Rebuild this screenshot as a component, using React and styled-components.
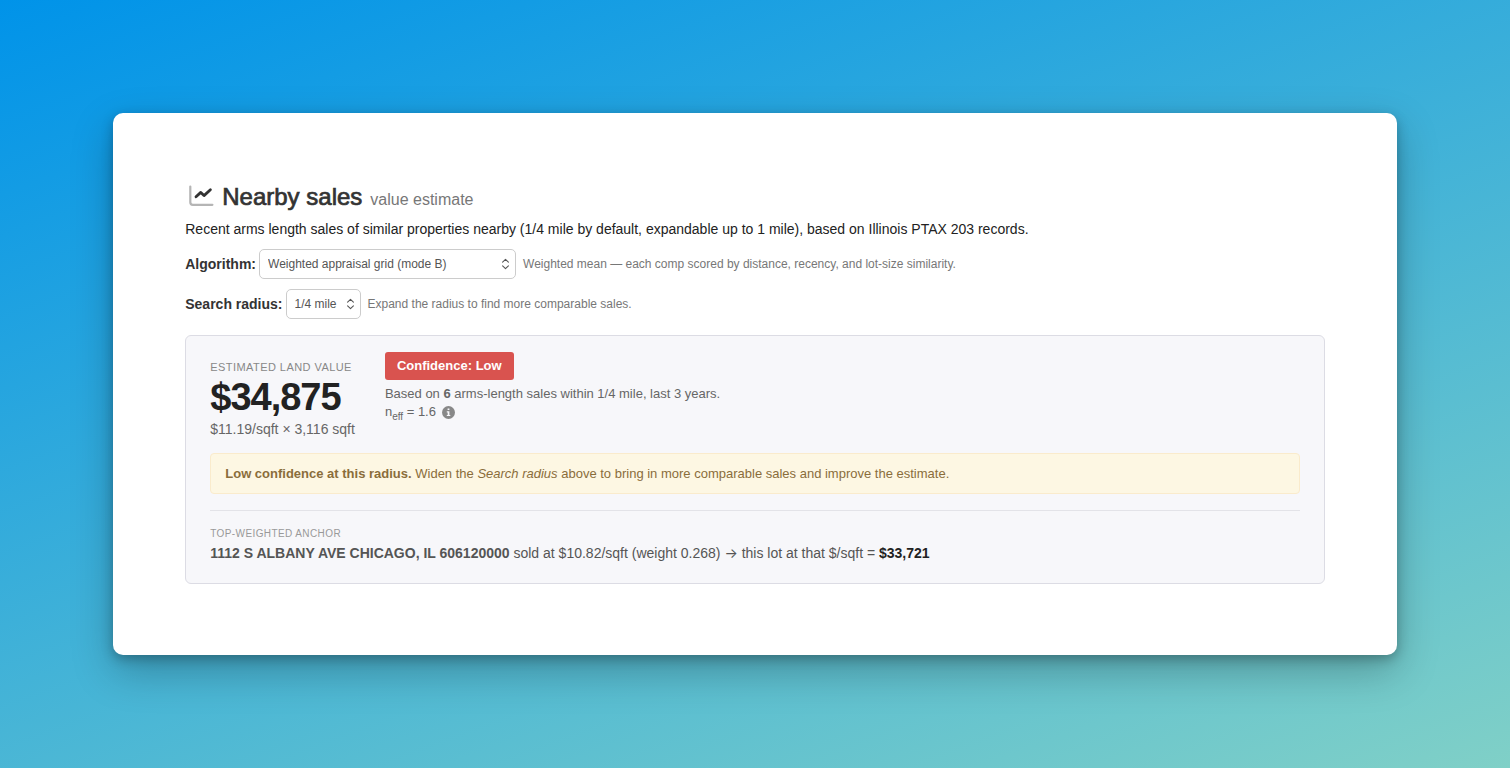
import React from 'react';
import styled, { createGlobalStyle } from 'styled-components';

const GlobalStyle = createGlobalStyle`
  *, *::before, *::after { box-sizing: border-box; }
  body {
    margin: 0;
    background: #46b2d6;
    color: #333;
    font-family: "Helvetica Neue", "Liberation Sans", Arial, sans-serif;
    font-size: 14px;
    line-height: 20px;
    -webkit-font-smoothing: antialiased;
  }
`;

const Page = styled.div`
  min-height: 100vh;
  display: flex;
  align-items: center;
  justify-content: center;
  padding: 32px 0;
  background: linear-gradient(160deg, #0093e9 0%, #80d0c7 100%);
`;

const Card = styled.main`
  width: 85%;
  padding: 71px 72px;
  border-radius: 10px;
  background: #fff;
  box-shadow: 0 16px 40px rgba(0, 0, 0, 0.25), 0 4px 12px rgba(0, 0, 0, 0.25);
`;

const Heading = styled.h1`
  display: flex;
  align-items: baseline;
  gap: 8px;
  margin: 0 0 7px;
  color: #333;
  font-size: 24px;
  font-weight: 400;
  line-height: 25px;
`;

const Title = styled.span`
  -webkit-text-stroke: 0.03em currentColor;
`;

const Subtitle = styled.small`
  color: #777;
  font-size: 16px;
`;

const ChartIcon = styled.svg`
  flex: none;
  width: 26px;
  height: 23px;
  margin-left: 3px;
  align-self: flex-start;
`;

const Intro = styled.p`
  margin: 0 0 10px;
  color: #222;
`;

const Field = styled.div`
  display: flex;
  align-items: center;
  min-height: 30px;
  margin-bottom: 10px;
`;

const FieldLabel = styled.label`
  margin-right: 3px;
  font-weight: 700;
`;

const SelectBox = styled.span`
  position: relative;
  display: inline-flex;
  width: ${(p) => p.$width};
  margin-right: 7px;
`;

const Select = styled.select`
  width: 100%;
  height: 30px;
  padding: 0 20px 0 8px;
  border: 1px solid #ccc;
  border-radius: 5px;
  appearance: none;
  background: #fff;
  color: #555;
  font: inherit;
  font-size: 12px;
`;

const Chevrons = styled.svg`
  position: absolute;
  top: 9px;
  right: 6px;
  width: 9px;
  height: 12px;
  pointer-events: none;
`;

const Hint = styled.span`
  color: #777;
  font-size: 12px;
`;

const Panel = styled.section`
  margin-top: 16px;
  padding: 16px 24px 20px;
  border: 1px solid #dcdce4;
  border-radius: 6px;
  background: #f7f7fa;
  color: #555;
`;

const Summary = styled.div`
  display: flex;
  align-items: flex-start;
  gap: 30px;
`;

const Estimate = styled.div`
  padding-top: 7px;
`;

const Caption = styled.div`
  color: ${(p) => (p.$small ? '#999' : '#888')};
  font-size: ${(p) => (p.$small ? '10px' : '11px')};
  line-height: ${(p) => (p.$small ? '18px' : '16px')};
  letter-spacing: 0.04em;
  text-transform: uppercase;
`;

const Value = styled.div`
  color: #222;
  font-size: 38px;
  font-weight: 700;
  line-height: 44px;
  letter-spacing: -1px;
`;

const Rate = styled.div`
  color: #666;
`;

const Evidence = styled.div`
  color: #666;
  font-size: 13px;
  line-height: 18px;
`;

const Badge = styled.div`
  width: fit-content;
  margin-bottom: 5px;
  padding: 5px 12px;
  border-radius: 3px;
  background: #d9534f;
  color: #fff;
  font-weight: 700;
`;

const Strong = styled.b`
  color: ${(p) => p.$color || 'inherit'};
`;

const Sample = styled.div`
  display: flex;
  align-items: center;
  gap: 6px;
`;

const Sub = styled.sub`
  font-size: 10px;
  line-height: 0;
`;

const InfoIcon = styled.svg`
  width: 13px;
  height: 13px;
`;

const Notice = styled.div`
  margin-top: 14px;
  padding: 10px 14px;
  border: 1px solid #faebcc;
  border-radius: 4px;
  background: #fdf7e3;
  color: #8a6d3b;
  font-size: 13px;
  line-height: 19px;
`;

const Anchor = styled.div`
  margin-top: 16px;
  padding-top: 14px;
  border-top: 1px solid #e3e3e8;
`;

const Arrow = styled.span`
  font-family: Inter, sans-serif;
  line-height: 1;
`;

function SelectField({ id, label, width, options, hint }) {
  return (
    <Field>
      <FieldLabel htmlFor={id}>{label}</FieldLabel>
      <SelectBox $width={width}>
        <Select id={id} defaultValue={options[0]}>
          {options.map((o) => (
            <option key={o}>{o}</option>
          ))}
        </Select>
        <Chevrons viewBox="0 0 9 12" fill="none" stroke="#555" strokeWidth="1.1" strokeLinecap="round" strokeLinejoin="round" aria-hidden="true">
          <path d="M1.6 4.2 4.5 1.4 7.4 4.2M1.6 7.8 4.5 10.6 7.4 7.8" />
        </Chevrons>
      </SelectBox>
      <Hint>{hint}</Hint>
    </Field>
  );
}

export default function App() {
  return (
    <>
      <GlobalStyle />
      <Page>
        <Card>
          <Heading>
            <ChartIcon viewBox="0 0 26 23" fill="none" strokeLinecap="round" strokeLinejoin="round" aria-hidden="true">
              <path d="M2.3 2.5V18.3Q2.3 20.8 4.8 20.8H24.4" stroke="#b5b5b5" strokeWidth="2.2" />
              <path d="M8 12.8 12.8 8.4 16 11.6 22.4 5.8" stroke="#333" strokeWidth="2.8" />
            </ChartIcon>
            <Title>Nearby sales</Title>
            <Subtitle>value estimate</Subtitle>
          </Heading>
          <Intro>
            Recent arms length sales of similar properties nearby (1/4 mile by default, expandable up to 1 mile), based
            on Illinois PTAX 203 records.
          </Intro>
          <SelectField
            id="algorithm"
            label="Algorithm:"
            width="257px"
            options={['Weighted appraisal grid (mode B)']}
            hint="Weighted mean — each comp scored by distance, recency, and lot-size similarity."
          />
          <SelectField
            id="radius"
            label="Search radius:"
            width="75px"
            options={['1/4 mile', '1/2 mile', '1 mile']}
            hint="Expand the radius to find more comparable sales."
          />
          <Panel>
            <Summary>
              <Estimate>
                <Caption>Estimated land value</Caption>
                <Value>$34,875</Value>
                <Rate>$11.19/sqft × 3,116 sqft</Rate>
              </Estimate>
              <Evidence>
                <Badge>Confidence: Low</Badge>
                <div>
                  Based on <Strong>6</Strong> arms-length sales within 1/4 mile, last 3 years.
                </div>
                <Sample>
                  <span>
                    n<Sub>eff</Sub> = 1.6
                  </span>
                  <InfoIcon viewBox="0 0 13 13" aria-hidden="true">
                    <circle cx="6.5" cy="6.5" r="6.5" fill="#888" />
                    <path d="M5.6 2.4H7.4V4.1H5.6ZM4.8 5.2H7.4V8.9H8.3V10.1H4.8V8.9H5.7V6.4H4.8Z" fill="#f7f7fa" />
                  </InfoIcon>
                </Sample>
              </Evidence>
            </Summary>
            <Notice>
              <Strong>Low confidence at this radius.</Strong> Widen the <em>Search radius</em> above to bring in more
              comparable sales and improve the estimate.
            </Notice>
            <Anchor>
              <Caption $small>Top-weighted anchor</Caption>
              <div>
                <Strong>1112 S ALBANY AVE CHICAGO, IL 606120000</Strong> sold at $10.82/sqft (weight 0.268){' '}
                <Arrow>→</Arrow> this lot at that $/sqft = <Strong $color="#222">$33,721</Strong>
              </div>
            </Anchor>
          </Panel>
        </Card>
      </Page>
    </>
  );
}
